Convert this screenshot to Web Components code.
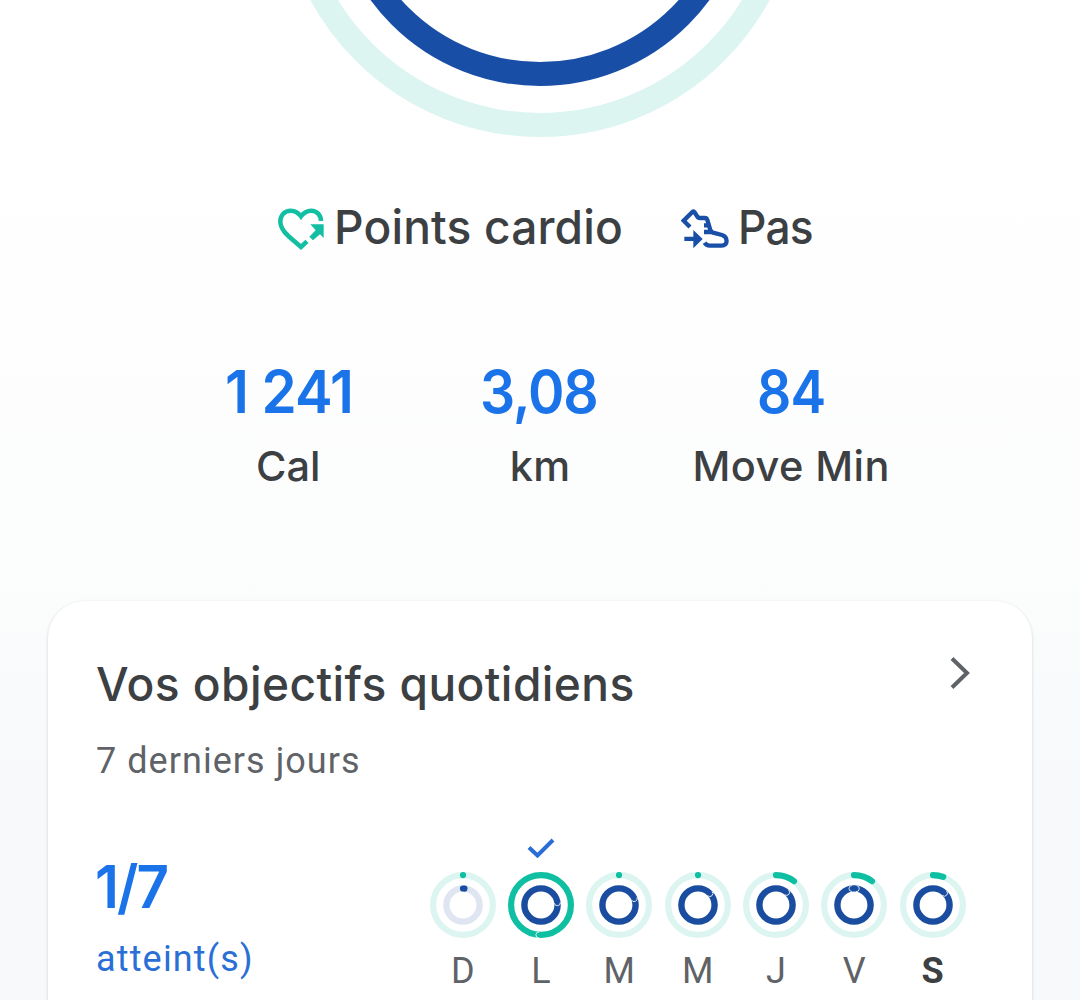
<!DOCTYPE html>
<html lang="fr">
<head>
<meta charset="utf-8">
<title>Vos objectifs quotidiens</title>
<style>
  body { margin: 0; height: 1000px; overflow: hidden; }
</style>
</head>
<body>
<fit-app></fit-app>
<script>
// Text spaced so that its drawn glyphs span exactly the given width;
// "stretch" narrows or widens the glyphs themselves.
class InkText extends HTMLElement {
  connectedCallback() {
    const width = Number(this.getAttribute('width'));
    const stretch = Number(this.getAttribute('stretch') || 1);
    const root = this.attachShadow({ mode: 'open' });
    root.innerHTML = `<style>
      :host { display: block; width: ${width}px; white-space: nowrap; flex: none; }
      span { display: block; width: max-content; transform-origin: 0 50%;
        ${stretch !== 1 ? `transform: scaleX(${stretch});` : ''} }
    </style><span><slot></slot></span>`;
    const span = root.querySelector('span');
    const cs = getComputedStyle(this);
    const text = this.textContent;
    const ctx = document.createElement('canvas').getContext('2d');
    ctx.font = `${cs.fontWeight} ${cs.fontSize} ${cs.fontFamily}`;
    const m = ctx.measureText(text);
    const ink = m.actualBoundingBoxLeft + m.actualBoundingBoxRight;
    span.style.letterSpacing = text.length > 1 ? `${(width / stretch - ink) / (text.length - 1)}px` : '0';
    span.style.marginLeft = `${m.actualBoundingBoxLeft * stretch}px`;
  }
}
customElements.define('ink-text', InkText);

class GoalRings extends HTMLElement {
  connectedCallback() {
    this.attachShadow({ mode: 'open' }).innerHTML = `<style>
      :host { display: block; height: 137px; }
      svg { display: block; }
    </style>
    <svg width="1080" height="137" viewBox="0 0 1080 137" fill="none" stroke-width="24">
      <circle cx="540" cy="-124" r="249" stroke="#dcf5f1"/>
      <circle cx="540" cy="-124" r="198" stroke="#184ea6"/>
    </svg>`;
  }
}
customElements.define('goal-rings', GoalRings);

class GoalLegend extends HTMLElement {
  connectedCallback() {
    this.attachShadow({ mode: 'open' }).innerHTML = `<style>
      :host { display: flex; align-items: center; height: 60px; padding: 60px 0 0 278px;
        font: 500 47px/60px Inter, sans-serif; color: #3c4043; }
      svg { flex: none; display: block; margin-top: 3px; }
      .heart { margin-right: 12px; }
      .shoe { margin: 3px 12px 0 59px; }
    </style>
    <svg class="heart" width="47" height="42" viewBox="54 54 141 126" fill="none">
      <path d="M183 93C183 75 170 62 154 62C140 62 130 69 123 79C116 69 106 62 92 62C74 62 61 76 61 94C61 122 85 138 123 171L141 154" stroke="#12bfa2" stroke-width="13.5"/>
      <path d="M151 103H191V144L180 133L159 151L148 140L167 121Z" fill="#12bfa2"/>
    </svg>
    <ink-text width="284.5" stretch=".98">Points cardio</ink-text>
    <svg class="shoe" width="48" height="40" viewBox="64 58 144 120" fill="none" stroke="#1a4fa8" stroke-width="13">
      <path d="M91 112L72 93L98 67Q101 64 104 67L112 79Q115 85 121 85H135Q141 85 143 91L152 121Q154 127 160 129L187 136C205 142 206 168 186 168H150Q140 168 135 159"/>
      <path d="M133 107H151M133 127H157"/>
      <path d="M74 141H101V121L129 148L101 176V154H74Z" fill="#1a4fa8" stroke="none"/>
    </svg>
    <ink-text width="71.5" stretch=".94">Pas</ink-text>`;
  }
}
customElements.define('goal-legend', GoalLegend);

class StatItem extends HTMLElement {
  connectedCallback() {
    const g = n => this.getAttribute(n);
    this.attachShadow({ mode: 'open' }).innerHTML = `<style>
      :host { display: flex; flex-direction: column; align-items: center; flex: none; width: 194px; }
      .value { font: 600 59.5px/76px Inter, sans-serif; color: #1a73e8; }
      .label { font: 500 41.5px/54px Inter, sans-serif; color: #3c4043; margin-top: 10px; }
    </style>
    <ink-text class="value" width="${g('vw')}" stretch="${g('vs') || .9}">${g('value')}</ink-text>
    <ink-text class="label" width="${g('lw')}">${g('label')}</ink-text>`;
  }
}
customElements.define('stat-item', StatItem);

class StatRow extends HTMLElement {
  connectedCallback() {
    this.attachShadow({ mode: 'open' }).innerHTML = `<style>
      :host { display: flex; gap: 57.5px; padding: 96px 0 0 191px; height: 248px; }
    </style><slot></slot>`;
  }
}
customElements.define('stat-row', StatRow);

class DayRing extends HTMLElement {
  connectedCallback() {
    const n = k => Number(this.getAttribute(k) || 0);
    const pt = (r, a) => [33 + r * Math.sin(a * Math.PI / 180), 33 - r * Math.cos(a * Math.PI / 180)];
    const arc = (r, a, color) => {
      const [x, y] = pt(r, a);
      return `<path d="M33 ${33 - r}A${r} ${r} 0 0 1 ${x} ${y}" stroke="${color}" stroke-linecap="round"/>`;
    };
    const tip = (r, a) => {
      const [x, y] = pt(r, a);
      return `<path transform="translate(${x} ${y}) rotate(${a})" d="M0 -3A3 3 0 0 1 0 3" stroke="#fff" stroke-width=".8"/>`;
    };
    const done = this.hasAttribute('done');
    const full = n('lap') > 0;
    const green = '#0fbfa2', blue = '#1a4c9f';
    const today = this.hasAttribute('today');
    this.attachShadow({ mode: 'open' }).innerHTML = `<style>
      :host { display: flex; flex-direction: column; align-items: center; width: 66px; flex: none; }
      .check { height: 20px; margin-bottom: 14px; }
      svg { display: block; }
      .day { font: ${today ? 700 : 400} 36px/44px Roboto, sans-serif; color: ${today ? '#3c4043' : '#5f6368'}; margin-top: 11px; }
    </style>
    <div class="check">${done ? '<svg width="28" height="20" viewBox="0 0 28 20" fill="none" stroke="#2a6dd6" stroke-width="4"><path d="M2 9.5L10.5 17.5L26 2"/></svg>' : ''}</div>
    <svg width="66" height="66" viewBox="0 0 66 66" fill="none" stroke-width="6.2">
      <circle cx="33" cy="33" r="29.9" stroke="${done ? green : '#dcf5f1'}"/>
      ${done ? tip(30, 184) : arc(29.9, n('heart') || .1, green)}
      <circle cx="33" cy="33" r="16.6" stroke-width="6.4" stroke="${full ? blue : '#e0e5f2'}"/>
      ${full ? tip(16.5, n('lap')) : arc(16.5, 5, blue)}
      ${this.hasAttribute('start') ? '<path d="M31 13.5A3 3 0 0 0 31 19.5" stroke="#fff" stroke-width=".8"/>' : ''}
    </svg>
    <div class="day"><slot></slot></div>`;
  }
}
customElements.define('day-ring', DayRing);

class GoalCard extends HTMLElement {
  connectedCallback() {
    this.attachShadow({ mode: 'open' }).innerHTML = `<style>
      :host { display: block; box-sizing: border-box; margin: 0 48px; height: 440px; padding: 52px 49px 0;
        background: #fff; border-radius: 37px; box-shadow: 0 1px 3px rgba(60,64,67,.24); }
      header { display: flex; justify-content: space-between; }
      .title { font: 500 47px/61px Inter, sans-serif; color: #3c4043; }
      .sub { font: 400 36px/46px Roboto, sans-serif; color: #5f6368; margin-top: 24px; }
      .chevron { display: block; margin: 4px 13px 0 0; }
      .week { display: flex; justify-content: space-between; margin-top: 54px; }
      .score { font: 600 59.5px/76px Inter, sans-serif; color: #1a73e8; margin-top: 10px; }
      .reached { font: 400 36px/46px Roboto, sans-serif; color: #2a6fd6; margin-top: 12px; }
      .days { display: flex; gap: 12.3px; margin-right: 17.5px; }
    </style>
    <header>
      <ink-text class="title" width="536" stretch=".98">Vos objectifs quotidiens</ink-text>
      <svg class="chevron" width="20" height="32" viewBox="0 0 20 32" fill="none" stroke="#5f6368" stroke-width="4"><path d="M2 1.5L17 16L2 30.5"/></svg>
    </header>
    <ink-text class="sub" width="261">7 derniers jours</ink-text>
    <div class="week">
      <div>
        <ink-text class="score" width="70" stretch=".95">1/7</ink-text>
        <ink-text class="reached" width="153">atteint(s)</ink-text>
      </div>
      <div class="days"><slot></slot></div>
    </div>`;
  }
}
customElements.define('goal-card', GoalCard);

class FitApp extends HTMLElement {
  connectedCallback() {
    this.attachShadow({ mode: 'open' }).innerHTML = `<style>
      :host { display: block; width: 1080px; height: 1000px; overflow: hidden;
        background: linear-gradient(#fff 0, #fefefe 320px, #fbfcfc 600px, #f8f9fb 760px, #f8f9fb 100%); }
    </style>
    <goal-rings></goal-rings>
    <goal-legend></goal-legend>
    <stat-row>
      <stat-item value="1 241" vw="123" vs=".95" label="Cal" lw="60"></stat-item>
      <stat-item value="3,08" vw="114" vs=".93" label="km" lw="55.5"></stat-item>
      <stat-item value="84" vw="65" label="Move Min" lw="191"></stat-item>
    </stat-row>
    <goal-card>
      <day-ring>D</day-ring>
      <day-ring done lap="82">L</day-ring>
      <day-ring lap="67">M</day-ring>
      <day-ring lap="46">M</day-ring>
      <day-ring heart="37" lap="40">J</day-ring>
      <day-ring heart="37" lap="8" start>V</day-ring>
      <day-ring heart="20" lap="44" today>S</day-ring>
    </goal-card>`;
  }
}
customElements.define('fit-app', FitApp);
</script>
</body>
</html>
